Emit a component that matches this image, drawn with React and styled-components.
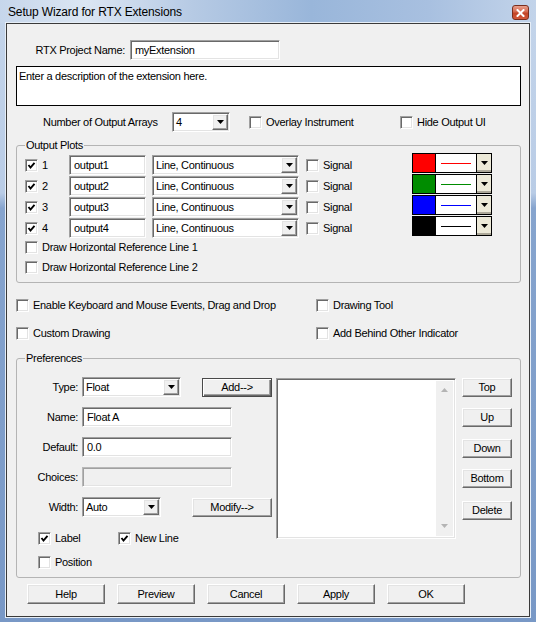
import React from 'react';
import styled, { createGlobalStyle, css } from 'styled-components';

const GlobalStyle = createGlobalStyle`
  html, body {
    margin: 0;
    padding: 0;
    background: #ffffff;
  }
  body {
    font-family: "Liberation Sans", Arial, sans-serif;
    font-size: 11px;
    letter-spacing: -0.3px;
    color: #000;
  }
  * {
    box-sizing: border-box;
  }
  input, button {
    letter-spacing: inherit;
  }
`;

/* classic 3D edges */
const sunken = css`
  border: 1px solid;
  border-color: #a0a0a0 #ffffff #ffffff #a0a0a0;
  box-shadow: inset 1px 1px 0 #696969, inset -1px -1px 0 #e3e3e3;
`;

const raised = css`
  border: 1px solid;
  border-color: #ffffff #696969 #696969 #ffffff;
  box-shadow: inset -1px -1px 0 #a0a0a0, inset 1px 1px 0 #e3e3e3;
  background: #f0f0f0;
`;

const Window = styled.div`
  width: 536px;
  height: 622px;
  display: flex;
  flex-direction: column;
  overflow: hidden;
`;

const TitleBar = styled.div`
  height: 23px;
  flex: none;
  display: flex;
  align-items: center;
  justify-content: space-between;
  padding: 0 7px 0 8px;
  background: linear-gradient(90deg, #c6d6eb 0%, #dbe6f3 16%, #b6cae4 36%, #99b6da 58%, #a8c0e0 80%, #c3d4ea 100%);
`;

const Title = styled.span`
  font-size: 12px;
  letter-spacing: -0.15px;
  color: #000;
`;

const CloseButton = styled.div`
  width: 17px;
  height: 15px;
  margin-top: 2px;
  border: 1px solid #7a2e1e;
  border-radius: 3px;
  background: linear-gradient(180deg, #e9a08d 0%, #d4674d 45%, #c24527 55%, #d2583a 100%);
  display: flex;
  align-items: center;
  justify-content: center;
`;

const Frame = styled.div`
  flex: 1;
  display: flex;
  padding: 0 7px 5px 6px;
  background: linear-gradient(180deg, #c3d4ea 0%, #b9cce6 170px, #86a4ce 185px, #7898c6 100%);
`;

const Client = styled.div`
  flex: 1;
  display: flex;
  flex-direction: column;
  background: #f0f0f0;
  border: 1px solid #3a3a3a;
  box-shadow: 0 0 0 1px #e6eef7;
  padding: 16px 8px 0 9px;
`;

const Row = styled.div`
  display: flex;
  align-items: center;
  flex: none;
  height: ${p => p.$h || 20}px;
  margin-top: ${p => p.$mt || 0}px;
  padding-left: ${p => p.$pl || 0}px;
`;

const Label = styled.span`
  flex: none;
  width: ${p => p.$w}px;
  margin-right: ${p => p.$mr || 0}px;
  text-align: ${p => p.$align || 'left'};
  white-space: nowrap;
`;

const TextInput = styled.input`
  ${sunken}
  flex: none;
  width: ${p => p.$w}px;
  height: 20px;
  padding: 0 4px;
  font: inherit;
  color: #000;
  background: #ffffff;
  outline: none;

  &:disabled {
    background: #f0f0f0;
    border-color: #b8b8b8 #ffffff #ffffff #b8b8b8;
    box-shadow: inset 1px 1px 0 #a0a0a0, inset -1px -1px 0 #e3e3e3;
  }
`;

const Description = styled.div`
  flex: none;
  height: 40px;
  margin-top: 6px;
  border: 1px solid #000;
  background: #fff;
  padding: 3px 2px;
  line-height: 13px;
`;

const SelectBox = styled.div`
  ${sunken}
  flex: none;
  width: ${p => p.$w}px;
  height: 20px;
  padding: 1px;
  background: #fff;
  display: flex;
  align-items: stretch;
`;

const SelectText = styled.span`
  flex: 1;
  padding-left: 2px;
  line-height: 16px;
  white-space: nowrap;
  overflow: hidden;
`;

const DropButton = styled.span`
  ${raised}
  width: 16px;
  flex: none;
  display: flex;
  align-items: center;
  justify-content: center;
`;

const Arrow = ({ color = '#000' }) => (
  <svg width="7" height="4" viewBox="0 0 7 4">
    <polygon points="0,0 7,0 3.5,4" fill={color} />
  </svg>
);

const UpArrow = ({ color = '#000' }) => (
  <svg width="7" height="4" viewBox="0 0 7 4">
    <polygon points="0,4 7,4 3.5,0" fill={color} />
  </svg>
);

const Select = ({ w, value }) => (
  <SelectBox $w={w}>
    <SelectText>{value}</SelectText>
    <DropButton>
      <Arrow />
    </DropButton>
  </SelectBox>
);

const CheckItem = styled.span`
  display: flex;
  align-items: center;
  flex: none;
  height: 16px;
  width: ${p => (p.$w ? `${p.$w}px` : 'auto')};
  margin-left: ${p => p.$ml || 0}px;
  white-space: nowrap;
`;

const CheckBox = styled.span`
  ${sunken}
  width: 13px;
  height: 13px;
  flex: none;
  margin-right: 4px;
  background: #fff;
  display: flex;
  align-items: center;
  justify-content: center;
`;

const Check = ({ checked, w, ml, children }) => (
  <CheckItem $w={w} $ml={ml}>
    <CheckBox>
      {checked && (
        <svg width="9" height="9" viewBox="0 0 9 9">
          <polyline points="1.5,4 3.5,6.5 7.5,1.8" fill="none" stroke="#000" strokeWidth="1.9" />
        </svg>
      )}
    </CheckBox>
    {children}
  </CheckItem>
);

const Group = styled.fieldset`
  flex: none;
  margin: ${p => p.$mt}px 0 0;
  padding: ${p => p.$pt}px 8px ${p => p.$pb}px 8px;
  border: 1px solid #b4b4b4;
  border-radius: 3px;
  min-width: 0;
`;

const Legend = styled.legend`
  padding: 0 1px;
  line-height: 13px;
`;

const PlotRow = styled.div`
  display: grid;
  grid-template-columns: 44px 83px 154px 106px 80px;
  align-items: center;
  height: 20px;
  margin-bottom: 1px;
`;

const Picker = styled.div`
  display: flex;
  height: 20px;
  margin: -2px 0 2px;
  border: 1px solid #000;
  background: #fff;
`;

const Swatch = styled.span`
  width: 23px;
  flex: none;
  background: ${p => p.$color};
  border-right: 1px solid #000;
`;

const LineCell = styled.span`
  width: 41px;
  flex: none;
  display: flex;
  align-items: center;
  padding: 0 5px;
  border-right: 1px solid #000;

  &::after {
    content: '';
    flex: 1;
    height: 1px;
    background: ${p => p.$color};
  }
`;

const PickerDrop = styled.span`
  flex: 1;
  background: #ece9d8;
  display: flex;
  align-items: center;
  justify-content: center;
  box-shadow: inset 0 -2px 0 #aca899;
`;

const ColorPicker = ({ color }) => (
  <Picker>
    <Swatch $color={color} />
    <LineCell $color={color} />
    <PickerDrop>
      <Arrow />
    </PickerDrop>
  </Picker>
);

const OptionGrid = styled.div`
  display: grid;
  grid-template-columns: 300px 1fr;
  row-gap: 12px;
  margin-top: 14px;
`;

const PrefBody = styled.div`
  display: flex;
  align-items: flex-start;
`;

const PrefForm = styled.div`
  width: 247px;
  flex: none;
  display: flex;
  flex-direction: column;
`;

const Button = styled.button`
  ${raised}
  flex: none;
  width: ${p => p.$w}px;
  height: ${p => p.$h || 19}px;
  margin-left: ${p => (p.$push ? 'auto' : '0')};
  margin-top: ${p => p.$mt || 0}px;
  padding: 0;
  font: inherit;
  color: #000;
  line-height: 1;

  ${p =>
    p.$default &&
    css`
      border-color: #4a4a4a;
      box-shadow: inset 1px 1px 0 #ffffff, inset -1px -1px 0 #696969, inset -2px -2px 0 #a0a0a0;
    `}
`;

const ListBox = styled.div`
  ${sunken}
  width: 180px;
  height: 161px;
  flex: none;
  margin: 1px 0 0 4px;
  padding: 2px;
  background: #fff;
  display: flex;
  justify-content: flex-end;
`;

const ScrollTrack = styled.div`
  width: 17px;
  background: #f0f0f0;
  display: flex;
  flex-direction: column;
  align-items: center;
  justify-content: space-between;
  padding: 7px 0 8px;
`;

const SideButtons = styled.div`
  display: flex;
  flex-direction: column;
  margin: 1px 0 0 6px;
`;

const Footer = styled.div`
  display: flex;
  gap: 12px;
  margin-top: 6px;
  padding-left: 11px;
`;

const plots = [
  { n: 1, name: 'output1', color: '#ff0000' },
  { n: 2, name: 'output2', color: '#008c00' },
  { n: 3, name: 'output3', color: '#0000ff' },
  { n: 4, name: 'output4', color: '#000000' },
];

const sideButtons = [
  { label: 'Top', mt: 0 },
  { label: 'Up', mt: 11 },
  { label: 'Down', mt: 12 },
  { label: 'Bottom', mt: 11 },
  { label: 'Delete', mt: 13 },
];

const footerButtons = ['Help', 'Preview', 'Cancel', 'Apply', 'OK'];

export default function App() {
  return (
    <>
      <GlobalStyle />
      <Window>
        <TitleBar>
          <Title>Setup Wizard for RTX Extensions</Title>
          <CloseButton>
            <svg width="9" height="8" viewBox="0 0 9 8">
              <path d="M1.5 1 L7.5 7 M7.5 1 L1.5 7" stroke="#fff" strokeWidth="2" strokeLinecap="square" />
            </svg>
          </CloseButton>
        </TitleBar>
        <Frame>
          <Client>
            <Row>
              <Label $w={109} $mr={5} $align="right">RTX Project Name:</Label>
              <TextInput $w={150} value="myExtension" readOnly />
            </Row>

            <Description>Enter a description of the extension here.</Description>

            <Row $mt={6} $pl={27}>
              <Label $w={129}>Number of Output Arrays</Label>
              <Select w={58} value="4" />
              <Check w={151} ml={19}>Overlay Instrument</Check>
              <Check>Hide Output UI</Check>
            </Row>

            <Group $mt={7} $pt={3} $pb={7}>
              <Legend>Output Plots</Legend>
              {plots.map(p => (
                <PlotRow key={p.n}>
                  <Check checked>{p.n}</Check>
                  <TextInput $w={77} value={p.name} readOnly />
                  <Select w={147} value="Line, Continuous" />
                  <Check>Signal</Check>
                  <ColorPicker color={p.color} />
                </PlotRow>
              ))}
              <Row $h={16}>
                <Check>Draw Horizontal Reference Line 1</Check>
              </Row>
              <Row $h={16} $mt={4}>
                <Check>Draw Horizontal Reference Line 2</Check>
              </Row>
            </Group>

            <OptionGrid>
              <Check>Enable Keyboard and Mouse Events, Drag and Drop</Check>
              <Check>Drawing Tool</Check>
              <Check>Custom Drawing</Check>
              <Check>Add Behind Other Indicator</Check>
            </OptionGrid>

            <Group $mt={11} $pt={12} $pb={7}>
              <Legend>Preferences</Legend>
              <PrefBody>
                <PrefForm>
                  <Row>
                    <Label $w={53} $mr={4} $align="right">Type:</Label>
                    <Select w={99} value="Float" />
                    <Button $w={70} $push $default>Add--&gt;</Button>
                  </Row>
                  <Row $mt={10}>
                    <Label $w={53} $mr={4} $align="right">Name:</Label>
                    <TextInput $w={150} value="Float A" readOnly />
                  </Row>
                  <Row $mt={10}>
                    <Label $w={53} $mr={4} $align="right">Default:</Label>
                    <TextInput $w={150} value="0.0" readOnly />
                  </Row>
                  <Row $mt={10}>
                    <Label $w={53} $mr={4} $align="right">Choices:</Label>
                    <TextInput $w={150} value="" disabled readOnly />
                  </Row>
                  <Row $mt={10}>
                    <Label $w={53} $mr={4} $align="right">Width:</Label>
                    <Select w={79} value="Auto" />
                    <Button $w={80} $push>Modify--&gt;</Button>
                  </Row>
                  <Row $h={16} $mt={13} $pl={13}>
                    <Check checked w={80}>Label</Check>
                    <Check checked>New Line</Check>
                  </Row>
                  <Row $h={16} $mt={8} $pl={13}>
                    <Check>Position</Check>
                  </Row>
                </PrefForm>
                <ListBox>
                  <ScrollTrack>
                    <UpArrow color="#b4b4b4" />
                    <Arrow color="#b4b4b4" />
                  </ScrollTrack>
                </ListBox>
                <SideButtons>
                  {sideButtons.map(b => (
                    <Button key={b.label} $w={50} $mt={b.mt}>{b.label}</Button>
                  ))}
                </SideButtons>
              </PrefBody>
            </Group>

            <Footer>
              {footerButtons.map(label => (
                <Button key={label} $w={78} $h={20}>{label}</Button>
              ))}
            </Footer>
          </Client>
        </Frame>
      </Window>
    </>
  );
}
